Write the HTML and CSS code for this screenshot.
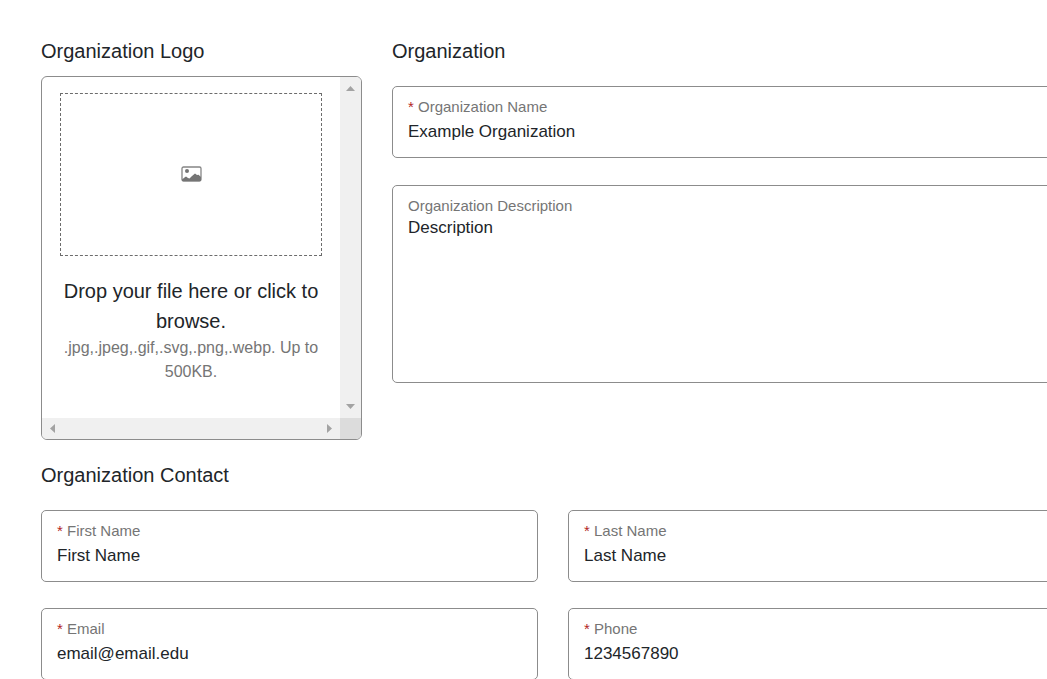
FILE: index.html
```
<!DOCTYPE html>
<html lang="en">
<head>
<meta charset="utf-8">
<title>Organization</title>
<link rel="stylesheet" href="styles.css">
</head>
<body>
<form class="form">
  <div class="top">
    <section class="logo">
      <h2 class="heading">Organization Logo</h2>
      <div class="scroller">
        <button type="button" class="drop">
          <span class="preview">
            <svg class="picture" viewBox="0 0 21 16" aria-hidden="true">
              <rect x="1" y="1" width="19" height="14" rx="1.500" fill="#fff" stroke="#858585" stroke-width="1.300"/>
              <circle cx="6" cy="5" r="2" fill="#757575"/>
              <path d="M1 13.500 3.500 11.500 5 10.500l2 1.500 1.500.500L11 10l3-2.500 2 1.500 1.500-.300L20 11v4H1z" fill="#757575"/>
            </svg>
          </span>
          <span class="drop-title">Drop your file here or click to browse.</span>
          <span class="drop-note">.jpg,.jpeg,.gif,.svg,.png,.webp. Up to 500KB.</span>
        </button>
        <div class="bar bar-y" aria-hidden="true">
          <svg class="arrow" viewBox="0 0 9 5"><path d="M0 5 4.500 0 9 5z"/></svg>
          <svg class="arrow" viewBox="0 0 9 5"><path d="M0 0h9L4.500 5z"/></svg>
        </div>
        <div class="bar bar-x" aria-hidden="true">
          <svg class="arrow arrow-x" viewBox="0 0 5 9"><path d="M5 0v9L0 4.500z"/></svg>
          <svg class="arrow arrow-x" viewBox="0 0 5 9"><path d="M0 0v9l5-4.500z"/></svg>
        </div>
        <div class="corner"></div>
      </div>
    </section>
    <section class="about">
      <h2 class="heading">Organization</h2>
      <div class="fields fields-about">
        <div class="field">
          <label class="label" for="org"><span class="required">*</span> Organization Name</label>
          <input class="control" id="org" type="text" value="Example Organization">
        </div>
        <div class="field field-area">
          <label class="label" for="description">Organization Description</label>
          <textarea class="control area" id="description">Description</textarea>
        </div>
      </div>
    </section>
  </div>
  <section class="contact">
    <h2 class="heading">Organization Contact</h2>
    <div class="fields fields-pair">
      <div class="field">
        <label class="label" for="first"><span class="required">*</span> First Name</label>
        <input class="control" id="first" type="text" value="First Name">
      </div>
      <div class="field">
        <label class="label" for="last"><span class="required">*</span> Last Name</label>
        <input class="control" id="last" type="text" value="Last Name">
      </div>
      <div class="field">
        <label class="label" for="email"><span class="required">*</span> Email</label>
        <input class="control" id="email" type="email" value="email@email.edu">
      </div>
      <div class="field">
        <label class="label" for="phone"><span class="required">*</span> Phone</label>
        <input class="control" id="phone" type="tel" value="1234567890">
      </div>
    </div>
  </section>
</form>
</body>
</html>
```
FILE: styles.css
```
* { box-sizing: border-box; }

body {
  margin: 0;
  padding: 36px 0 0 41px;
  overflow: hidden;
  background: #fff;
  color: #212529;
  font-family: Arial, "Liberation Sans", sans-serif;
}

.form { margin-right: -18px; }

.top {
  display: grid;
  grid-template-columns: 321px 1fr;
  gap: 30px;
}

.heading {
  margin: 0;
  font-size: 20px;
  font-weight: 400;
  line-height: 30px;
}

.scroller {
  display: grid;
  grid-template-columns: 1fr 21px;
  grid-template-rows: auto 21px;
  margin-top: 10px;
  overflow: hidden;
  border: 1px solid #8c8c8c;
  border-radius: 6px;
}

.drop {
  display: flex;
  flex-direction: column;
  padding: 16px 18px 34px;
  border: 0;
  background: none;
  color: inherit;
  font-family: inherit;
  text-align: center;
}

.preview {
  display: flex;
  align-items: center;
  justify-content: center;
  height: 163px;
  margin-bottom: 20px;
  padding-bottom: 1px;
  border: 1px dashed #6c6c6c;
}

.picture { width: 21px; height: 16px; }
.drop-title { font-size: 20px; line-height: 30px; }
.drop-note { color: #757575; font-size: 16px; line-height: 24px; }

.bar {
  display: flex;
  justify-content: space-between;
  align-items: center;
  padding: 8px;
  background: #f0f0f0;
}

.bar-y {
  flex-direction: column;
  padding: 9px 6px;
}

.corner { background: #dcdcdc; }
.arrow { flex: none; width: 9px; height: 5px; fill: #a3a3a3; }
.arrow-x { width: 5px; height: 9px; }

.fields {
  display: grid;
  gap: 26px 30px;
  margin-top: 20px;
}

.fields-about { row-gap: 27px; }
.fields-pair { grid-template-columns: 1fr 1fr; }
.contact { margin-top: 20px; }

.field {
  display: flex;
  flex-direction: column;
  min-height: 72px;
  padding: 9px 15px;
  border: 1px solid #8c8c8c;
  border-radius: 5px;
}

.field-area { height: 198px; }

.label {
  color: #757575;
  font-size: 15px;
  line-height: 22px;
}

.required { color: #b3261e; }

.control {
  width: 100%;
  height: 28px;
  padding: 0;
  border: 0;
  outline: 0;
  background: none;
  color: #212529;
  font-family: inherit;
  font-size: 17px;
  line-height: 22px;
}

.area { flex: 1; resize: none; }
```
